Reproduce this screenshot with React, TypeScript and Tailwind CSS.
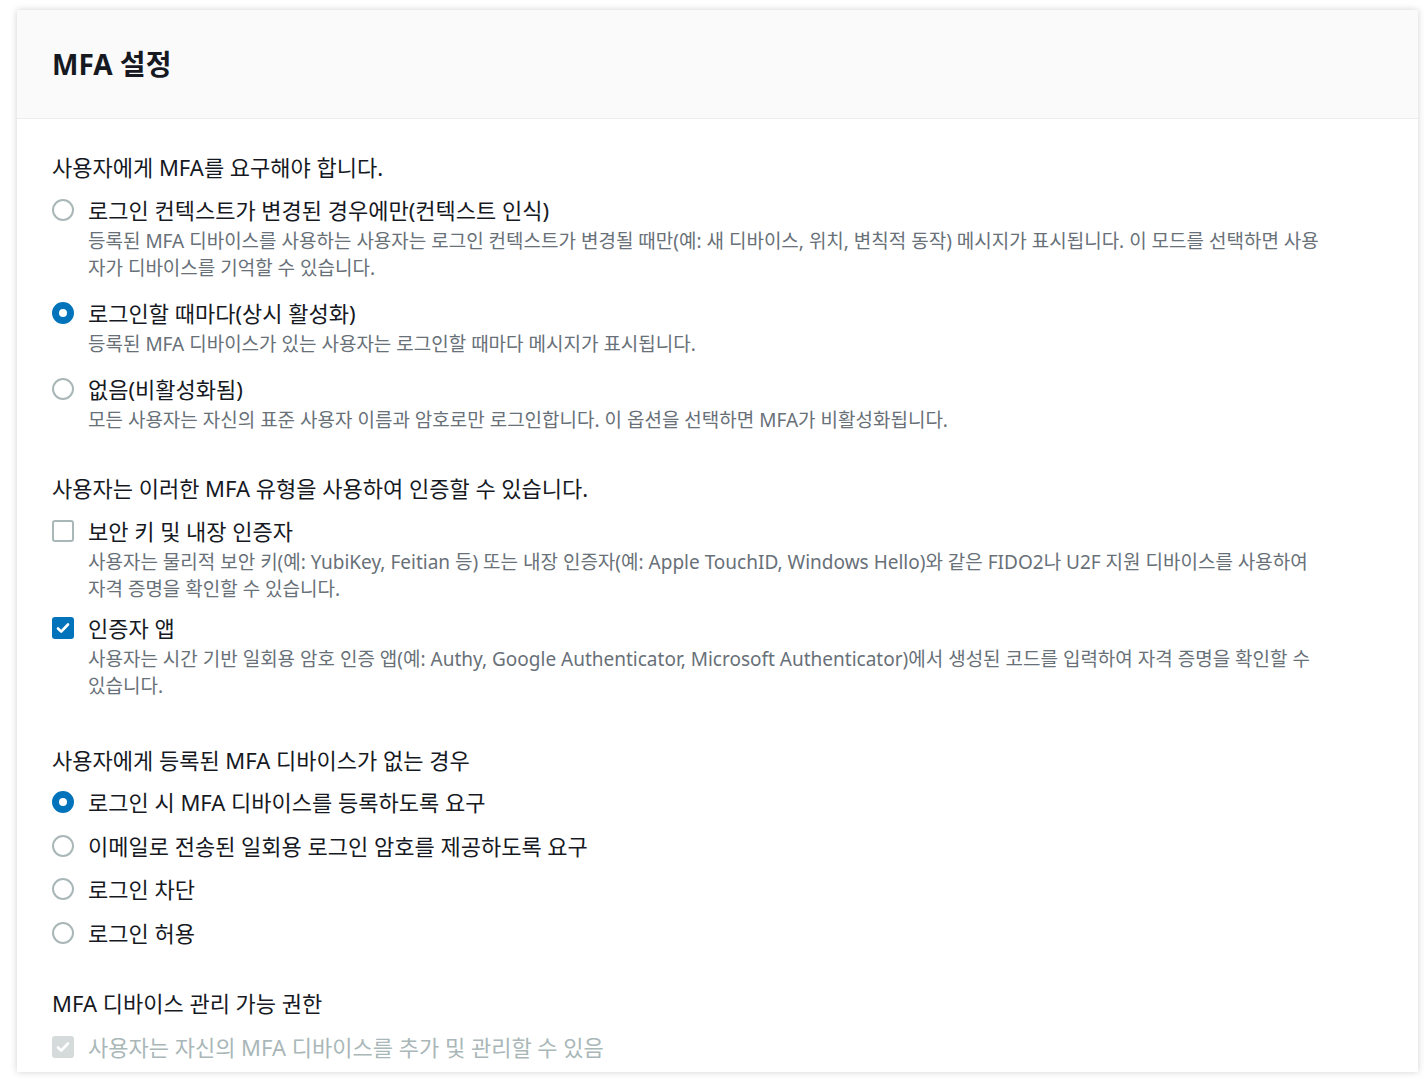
import React from "react";

// --- Helper Types & Data ---
interface Choice {
  label: string;
  desc?: string[];
  checked?: boolean;
}

const requireOptions: Choice[] = [
  {
    label: "로그인 컨텍스트가 변경된 경우에만(컨텍스트 인식)",
    desc: [
      "등록된 MFA 디바이스를 사용하는 사용자는 로그인 컨텍스트가 변경될 때만(예: 새 디바이스, 위치, 변칙적 동작) 메시지가 표시됩니다. 이 모드를 선택하면 사용",
      "자가 디바이스를 기억할 수 있습니다.",
    ],
  },
  {
    label: "로그인할 때마다(상시 활성화)",
    desc: ["등록된 MFA 디바이스가 있는 사용자는 로그인할 때마다 메시지가 표시됩니다."],
    checked: true,
  },
  {
    label: "없음(비활성화됨)",
    desc: ["모든 사용자는 자신의 표준 사용자 이름과 암호로만 로그인합니다. 이 옵션을 선택하면 MFA가 비활성화됩니다."],
  },
];

const typeOptions: Choice[] = [
  {
    label: "보안 키 및 내장 인증자",
    desc: [
      "사용자는 물리적 보안 키(예: YubiKey, Feitian 등) 또는 내장 인증자(예: Apple TouchID, Windows Hello)와 같은 FIDO2나 U2F 지원 디바이스를 사용하여",
      "자격 증명을 확인할 수 있습니다.",
    ],
  },
  {
    label: "인증자 앱",
    desc: [
      "사용자는 시간 기반 일회용 암호 인증 앱(예: Authy, Google Authenticator, Microsoft Authenticator)에서 생성된 코드를 입력하여 자격 증명을 확인할 수",
      "있습니다.",
    ],
    checked: true,
  },
];

const noDeviceOptions: Choice[] = [
  { label: "로그인 시 MFA 디바이스를 등록하도록 요구", checked: true },
  { label: "이메일로 전송된 일회용 로그인 암호를 제공하도록 요구" },
  { label: "로그인 차단" },
  { label: "로그인 허용" },
];

// --- Small controls ---
const Radio = ({ checked }: { checked?: boolean }) => (
  <span
    className={
      checked
        ? "mt-[3px] h-[22px] w-[22px] shrink-0 rounded-full border-[7px] border-[#0073bb] bg-white"
        : "mt-[3px] h-[22px] w-[22px] shrink-0 rounded-full border-2 border-[#aab7b8] bg-white"
    }
  />
);

const Checkbox = ({ checked, disabled }: { checked?: boolean; disabled?: boolean }) => {
  if (!checked) {
    return <span className="mt-[3px] h-[22px] w-[22px] shrink-0 rounded-[3px] border-2 border-[#aab7b8] bg-white" />;
  }
  return (
    <span
      className={
        disabled
          ? "mt-[3px] flex h-[22px] w-[22px] shrink-0 items-center justify-center rounded-[3px] bg-[#d5dbdb]"
          : "mt-[3px] flex h-[22px] w-[22px] shrink-0 items-center justify-center rounded-[3px] bg-[#0073bb]"
      }
    >
      <svg width="16" height="16" viewBox="0 0 16 16" fill="none">
        <path d="M3 8.5l3.2 3.2L13 4.5" stroke="white" strokeWidth="2.6" strokeLinecap="round" strokeLinejoin="round" />
      </svg>
    </span>
  );
};

const Option = ({ item, kind }: { item: Choice; kind: "radio" | "checkbox" }) => (
  <div className="flex gap-[14px]">
    {kind === "radio" ? <Radio checked={item.checked} /> : <Checkbox checked={item.checked} />}
    <div>
      <div className="text-[22px] leading-[28px] text-[#16191f]">{item.label}</div>
      {item.desc && (
        <div className="mt-[4px] text-[19px] leading-[27px] text-[#687078]">
          {item.desc.map((line) => (
            <div key={line} className="whitespace-nowrap">{line}</div>
          ))}
        </div>
      )}
    </div>
  </div>
);

const Heading = ({ children }: { children: React.ReactNode }) => (
  <div className="text-[22px] leading-[28px] text-[#16191f]">{children}</div>
);

// --- Main Component ---
export default function App() {
  return (
    <div
      className="min-h-screen bg-white pl-[17px] pt-[10px]"
      style={{ fontFamily: '"Noto Sans", "Noto Sans CJK KR", sans-serif' }}
    >
      <div className="w-[1401px] bg-white shadow-[0_0_7px_rgba(0,0,0,0.18)]">
        {/* Header */}
        <div className="flex h-[109px] items-center border-b border-[#eaeded] bg-[#fafafa] px-[35px]">
          <h2 className="text-[28px] font-bold text-[#16191f]">MFA 설정</h2>
        </div>

        {/* Body */}
        <div className="px-[35px] pb-[11px] pt-[34px]">
          <section>
            <Heading>사용자에게 MFA를 요구해야 합니다.</Heading>
            <div className="mt-[15px] flex flex-col gap-[17px]">
              {requireOptions.map((o) => (
                <Option key={o.label} item={o} kind="radio" />
              ))}
            </div>
          </section>

          <section className="mt-[40px]">
            <Heading>사용자는 이러한 MFA 유형을 사용하여 인증할 수 있습니다.</Heading>
            <div className="mt-[15px] flex flex-col gap-[11px]">
              {typeOptions.map((o) => (
                <Option key={o.label} item={o} kind="checkbox" />
              ))}
            </div>
          </section>

          <section className="mt-[46px]">
            <Heading>사용자에게 등록된 MFA 디바이스가 없는 경우</Heading>
            <div className="mt-[14px] flex flex-col gap-[15.5px]">
              {noDeviceOptions.map((o) => (
                <Option key={o.label} item={o} kind="radio" />
              ))}
            </div>
          </section>

          <section className="mt-[42px]">
            <Heading>MFA 디바이스 관리 가능 권한</Heading>
            <div className="mt-[16px] flex gap-[14px]">
              <Checkbox checked disabled />
              <div className="text-[22px] leading-[28px] text-[#aab7b8]">사용자는 자신의 MFA 디바이스를 추가 및 관리할 수 있음</div>
            </div>
          </section>
        </div>
      </div>
    </div>
  );
}
